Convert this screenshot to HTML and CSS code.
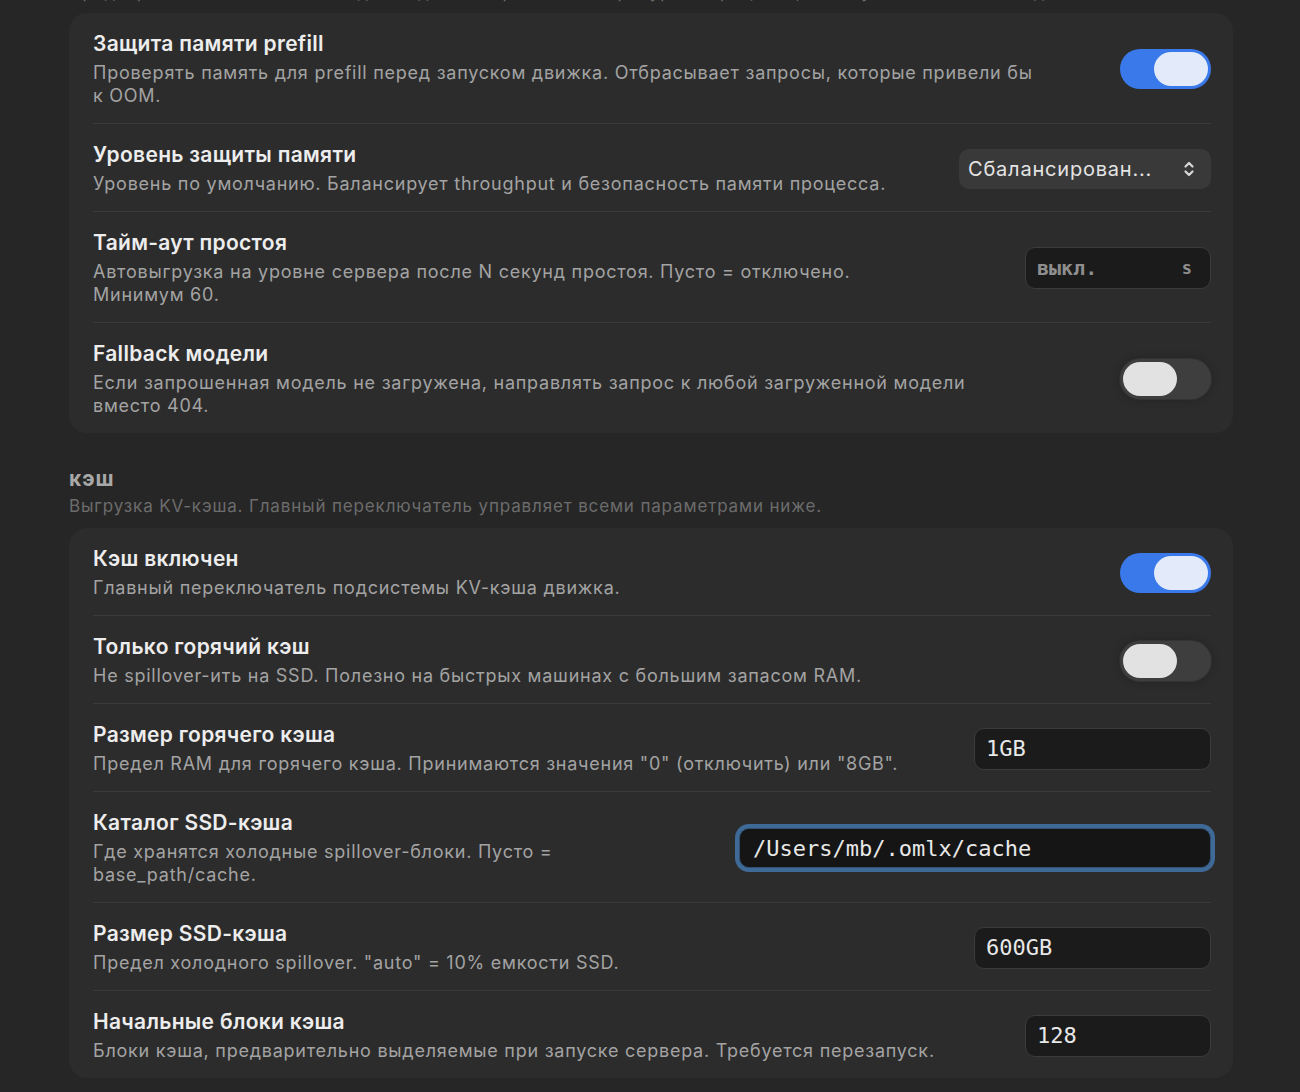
FILE: index.html
```html
<!DOCTYPE html>
<html lang="ru">
<head>
  <meta charset="UTF-8" />
  <title>Настройки движка</title>
  <link rel="stylesheet" href="styles.css">
</head>
<body>
  <main class="settings">

    <p class="section-desc cut">Предохранители памяти и поведение движка при нехватке ресурсов процесса, таймауты и запасные модели.</p>

    <!-- ПАМЯТЬ -->
    <div class="card">
      <div class="row">
        <div class="text">
          <div class="title">Защита памяти prefill</div>
          <div class="desc">Проверять память для prefill перед запуском движка. Отбрасывает запросы, которые привели бы<br>к OOM.</div>
        </div>
        <span class="toggle on"><span class="knob"></span></span>
      </div>
      <div class="row">
        <div class="text">
          <div class="title">Уровень защиты памяти</div>
          <div class="desc">Уровень по умолчанию. Балансирует throughput и безопасность памяти процесса.</div>
        </div>
        <div class="select">
          <span>Сбалансирован...</span>
          <svg width="12" height="18" viewBox="0 0 12 18" fill="none" stroke="#d8d8d8" stroke-width="2.2" stroke-linecap="round" stroke-linejoin="round">
            <path d="M2.5 6.5 L6 3 L9.5 6.5" />
            <path d="M2.5 11.5 L6 15 L9.5 11.5" />
          </svg>
        </div>
      </div>
      <div class="row">
        <div class="text">
          <div class="title">Тайм-аут простоя</div>
          <div class="desc">Автовыгрузка на уровне сервера после N секунд простоя. Пусто = отключено.<br>Минимум 60.</div>
        </div>
        <div class="field short">
          <span class="placeholder">выкл.</span>
          <span class="suffix">s</span>
        </div>
      </div>
      <div class="row">
        <div class="text">
          <div class="title">Fallback модели</div>
          <div class="desc">Если запрошенная модель не загружена, направлять запрос к любой загруженной модели<br>вместо 404.</div>
        </div>
        <span class="toggle"><span class="knob"></span></span>
      </div>
    </div>

    <!-- КЭШ -->
    <div class="section-head">
      <h3>кэш</h3>
      <p class="section-desc">Выгрузка KV-кэша. Главный переключатель управляет всеми параметрами ниже.</p>
    </div>

    <div class="card">
      <div class="row">
        <div class="text">
          <div class="title">Кэш включен</div>
          <div class="desc">Главный переключатель подсистемы KV-кэша движка.</div>
        </div>
        <span class="toggle on"><span class="knob"></span></span>
      </div>
      <div class="row">
        <div class="text">
          <div class="title">Только горячий кэш</div>
          <div class="desc">Не spillover-ить на SSD. Полезно на быстрых машинах с большим запасом RAM.</div>
        </div>
        <span class="toggle"><span class="knob"></span></span>
      </div>
      <div class="row">
        <div class="text">
          <div class="title">Размер горячего кэша</div>
          <div class="desc">Предел RAM для горячего кэша. Принимаются значения "0" (отключить) или "8GB".</div>
        </div>
        <div class="field medium">1GB</div>
      </div>
      <div class="row">
        <div class="text">
          <div class="title">Каталог SSD-кэша</div>
          <div class="desc">Где хранятся холодные spillover-блоки. Пусто =<br>base_path/cache.</div>
        </div>
        <div class="field wide focus">/Users/mb/.omlx/cache</div>
      </div>
      <div class="row">
        <div class="text">
          <div class="title">Размер SSD-кэша</div>
          <div class="desc">Предел холодного spillover. "auto" = 10% емкости SSD.</div>
        </div>
        <div class="field medium">600GB</div>
      </div>
      <div class="row">
        <div class="text">
          <div class="title">Начальные блоки кэша</div>
          <div class="desc">Блоки кэша, предварительно выделяемые при запуске сервера. Требуется перезапуск.</div>
        </div>
        <div class="field short">128</div>
      </div>
    </div>

  </main>
</body>
</html>
```

FILE: styles.css
```css
body {
  margin: 0;
  background: #262626;
  font-family: Inter, "Noto Sans", sans-serif;
  color: #ececec;
  overflow: hidden;
}
.settings {
  width: 1164px;
  margin-left: 69px;
}
.section-desc {
  margin: 0;
  font-size: 17px;
  line-height: 23px;
  letter-spacing: 0.85px;
  color: #6c6c6c;
}
.section-desc.cut {
  margin-top: -19px;
  margin-bottom: 9px;
}
.card {
  background: #2c2c2c;
  border-radius: 18px;
  padding: 0 22px 0 24px;
}
.row {
  display: flex;
  align-items: center;
  gap: 24px;
  padding: 18px 0 16px;
}
.row + .row {
  border-top: 1px solid #3a3a3a;
}
.text {
  flex: 1;
  min-width: 0;
}
.title {
  font-size: 21px;
  font-weight: 600;
  line-height: 26px;
  letter-spacing: 0.3px;
  color: #ededed;
}
.desc {
  margin-top: 4px;
  font-size: 18px;
  line-height: 23px;
  letter-spacing: 0.75px;
  color: #a3a3a3;
}
.section-head {
  margin: 34px 0 10px;
}
.section-head h3 {
  margin: 0 0 4px;
  font-size: 21px;
  font-weight: 700;
  line-height: 24px;
  letter-spacing: 1px;
  color: #a8a8a8;
}

/* controls */
.toggle {
  position: relative;
  flex: none;
  width: 91px;
  height: 40px;
  border-radius: 20px;
  background: #3e3e3e;
  box-shadow: 0 0 0 1px #333, 0 0 10px rgba(0, 0, 0, 0.25);
}
.toggle .knob {
  position: absolute;
  top: 3px;
  left: 3px;
  width: 54px;
  height: 34px;
  border-radius: 17px;
  background: #e2e2e2;
}
.toggle.on {
  background: #3979ea;
  box-shadow: none;
}
.toggle.on .knob {
  left: 34px;
  background: #e3ebfb;
}
.select {
  flex: none;
  display: flex;
  align-items: center;
  justify-content: space-between;
  box-sizing: border-box;
  width: 252px;
  height: 40px;
  padding: 0 16px 0 9px;
  border-radius: 10px;
  background: #393939;
  font-size: 20px;
  letter-spacing: 0.8px;
  color: #e4e4e4;
}
.field {
  flex: none;
  display: flex;
  align-items: center;
  justify-content: space-between;
  box-sizing: border-box;
  height: 42px;
  padding: 0 18px 0 11px;
  border: 1px solid #3b3b3b;
  border-radius: 10px;
  background: #1b1b1b;
  font-family: "DejaVu Sans Mono", "Liberation Mono", monospace;
  font-size: 22px;
  color: #e8e8e8;
}
.field.short { width: 186px; }
.field.medium { width: 237px; }
.field.wide {
  width: 472px;
  height: 40px;
  padding-left: 13px;
  background: #151515;
}
.field.focus {
  border-color: #2f5070;
  box-shadow: 0 0 0 4px #3f6a98;
}
.placeholder {
  font-size: 20px;
  font-weight: 700;
  color: #8e8e8e;
}
.suffix {
  font-size: 17px;
  font-weight: 700;
  color: #8e8e8e;
}
```
